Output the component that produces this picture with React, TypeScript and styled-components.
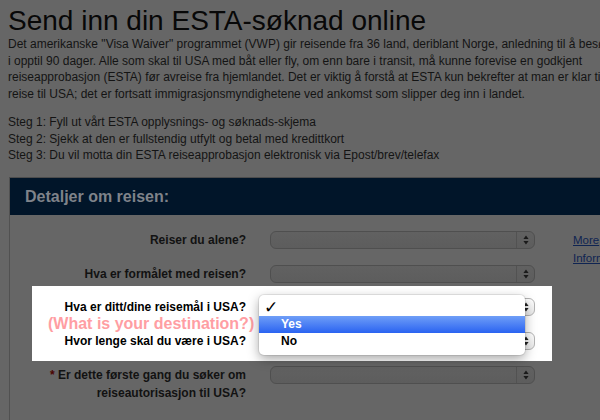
import React from 'react'
import styled, { createGlobalStyle } from 'styled-components'

const GlobalStyle = createGlobalStyle`
  html, body {
    margin: 0;
    padding: 0;
    background: #666666;
    overflow: hidden;
  }
  body {
    font-family: 'Liberation Sans', Arial, sans-serif;
  }
`

const intro = [
  'Det amerikanske "Visa Waiver" programmet (VWP) gir reisende fra 36 land, deriblant Norge, anledning til å besøke USA',
  'i opptil 90 dager. Alle som skal til USA med båt eller fly, om enn bare i transit, må kunne forevise en godkjent',
  'reiseapprobasjon (ESTA) før avreise fra hjemlandet. Det er viktig å forstå at ESTA kun bekrefter at man er klar til å',
  'reise til USA; det er fortsatt immigrasjonsmyndighetene ved ankomst som slipper deg inn i landet.',
]

const steps = [
  'Steg 1: Fyll ut vårt ESTA opplysnings- og søknads-skjema',
  'Steg 2: Sjekk at den er fullstendig utfylt og betal med kredittkort',
  'Steg 3: Du vil motta din ESTA reiseapprobasjon elektronisk via Epost/brev/telefax',
]

const SelectArrows = ({ color }: { color: string }) => (
  <svg width="6" height="10" viewBox="0 0 6 10">
    <path d="M3 0.5 L5.6 4 H0.4 Z M3 9.5 L5.6 6 H0.4 Z" fill={color} />
  </svg>
)

const Dropdown = ({ lit }: { lit?: boolean }) => (
  <Select $lit={lit}>
    <SelectButton $lit={lit}>
      <SelectArrows color={lit ? '#222' : '#1a1a1a'} />
    </SelectButton>
  </Select>
)

const App = () => {
  return (
    <Page>
      <GlobalStyle />
      <Title>Send inn din ESTA-søknad online</Title>
      <Block $gap={12}>
        {intro.map((line) => (
          <Line key={line}>{line}</Line>
        ))}
      </Block>
      <Block>
        {steps.map((line) => (
          <Line key={line}>{line}</Line>
        ))}
      </Block>

      <Panel>
        <PanelHeader>Detaljer om reisen:</PanelHeader>
        <PanelBody>
          <Row>
            <Label>Reiser du alene?</Label>
            <Dropdown />
            <SideLinks>
              <SideLink href="#">More</SideLink>
              <SideLink href="#">Information</SideLink>
            </SideLinks>
          </Row>
          <Row>
            <Label>Hva er formålet med reisen?</Label>
            <Dropdown />
          </Row>

          <Spotlight>
            <Row $indent={14}>
              <Label $lit>Hva er ditt/dine reisemål i USA?</Label>
              <Dropdown lit />
            </Row>
            <Row $indent={14}>
              <Label $lit>Hvor lenge skal du være i USA?</Label>
              <Dropdown lit />
            </Row>
            <Annotation>(What is your destination?)</Annotation>
            <Popup>
              <Option>
                <Check>✓</Check>
              </Option>
              <Option $active>Yes</Option>
              <Option>No</Option>
            </Popup>
          </Spotlight>

          <Row>
            <Label>
              <Required>*</Required> Er dette første gang du søker om reiseautorisasjon til USA?
            </Label>
            <Dropdown />
          </Row>
        </PanelBody>
      </Panel>
    </Page>
  )
}

export default App

const Page = styled.div`
  width: 700px;
  padding: 5px 0 0 8px;
`

const Title = styled.h1`
  margin: 0;
  font-size: 28px;
  font-weight: normal;
  line-height: 31px;
  color: #080808;
`

const Block = styled.div<{ $gap?: number }>`
  margin-bottom: ${({ $gap }) => $gap ?? 0}px;
`

const Line = styled.div`
  font-size: 12px;
  line-height: 16.5px;
  white-space: nowrap;
  color: #141414;
`

const Panel = styled.section`
  margin: 13.5px 0 0 1px;
  border-left: 1px solid #515151;
  border-top: 1px solid #4c4c4c;
  padding-bottom: 40px;
`

const PanelHeader = styled.div`
  height: 37px;
  display: flex;
  align-items: center;
  padding-left: 15px;
  background: #011529;
  font-size: 16px;
  font-weight: bold;
  color: #7f838a;
`

const PanelBody = styled.div`
  padding-top: 16px;
`

const Row = styled.div<{ $indent?: number }>`
  display: flex;
  align-items: flex-start;
  padding-left: ${({ $indent }) => $indent ?? 36}px;

  & + & {
    margin-top: 15.5px;
  }
`

const Label = styled.label<{ $lit?: boolean }>`
  width: 200px;
  margin-right: 24px;
  text-align: right;
  font-size: 12px;
  font-weight: bold;
  line-height: 18px;
  color: ${({ $lit }) => ($lit ? '#000' : '#121212')};
`

const Required = styled.span`
  color: #4a0303;
`

const Select = styled.div<{ $lit?: boolean }>`
  width: 265px;
  height: 18px;
  box-sizing: border-box;
  display: flex;
  justify-content: flex-end;
  flex-shrink: 0;
  border-radius: 6px;
  border: 1px solid ${({ $lit }) => ($lit ? '#b4b4b4' : '#4f4f4f')};
  background: ${({ $lit }) =>
    $lit
      ? 'linear-gradient(#ffffff, #e9e9e9)'
      : 'linear-gradient(#616161, #5d5d5d)'};
`

const SelectButton = styled.span<{ $lit?: boolean }>`
  width: 17px;
  display: flex;
  align-items: center;
  justify-content: center;
  border-left: 1px solid ${({ $lit }) => ($lit ? '#c4c4c4' : '#525252')};
`

const SideLinks = styled.div`
  display: flex;
  flex-direction: column;
  height: 18px;
  margin-left: 38px;
  font-size: 11.5px;
  line-height: 18px;
`

const SideLink = styled.a`
  color: #0f2452;
  text-decoration: underline;
  white-space: nowrap;
`

const Spotlight = styled.div`
  position: relative;
  width: 520px;
  margin: 3.5px 0 5.5px 22px;
  padding: 12px 0 11px;
  background: #ffffff;
`

const Annotation = styled.div`
  position: absolute;
  left: 16px;
  top: 28.5px;
  font-size: 16px;
  font-weight: bold;
  line-height: 18px;
  color: #ff9ea3;
  white-space: nowrap;
`

const Popup = styled.ul`
  position: absolute;
  left: 227px;
  top: 8.5px;
  width: 266px;
  margin: 0;
  padding: 4px 0 5px;
  list-style: none;
  background: #ffffff;
  border-radius: 5px;
  box-shadow: 0 4px 12px rgba(0, 0, 0, 0.35), 0 0 0 1px rgba(0, 0, 0, 0.08);
`

const Option = styled.li<{ $active?: boolean }>`
  position: relative;
  height: 17px;
  padding-left: 22px;
  font-size: 12px;
  font-weight: bold;
  line-height: 17px;
  color: ${({ $active }) => ($active ? '#ffffff' : '#000000')};
  background: ${({ $active }) =>
    $active ? 'linear-gradient(#6f9ef7, #2a63f1)' : 'none'};
`

const Check = styled.span`
  position: absolute;
  left: 5px;
  top: 0;
  font-family: 'DejaVu Sans', sans-serif;
  font-size: 17px;
  font-weight: bold;
  line-height: 17px;
`
